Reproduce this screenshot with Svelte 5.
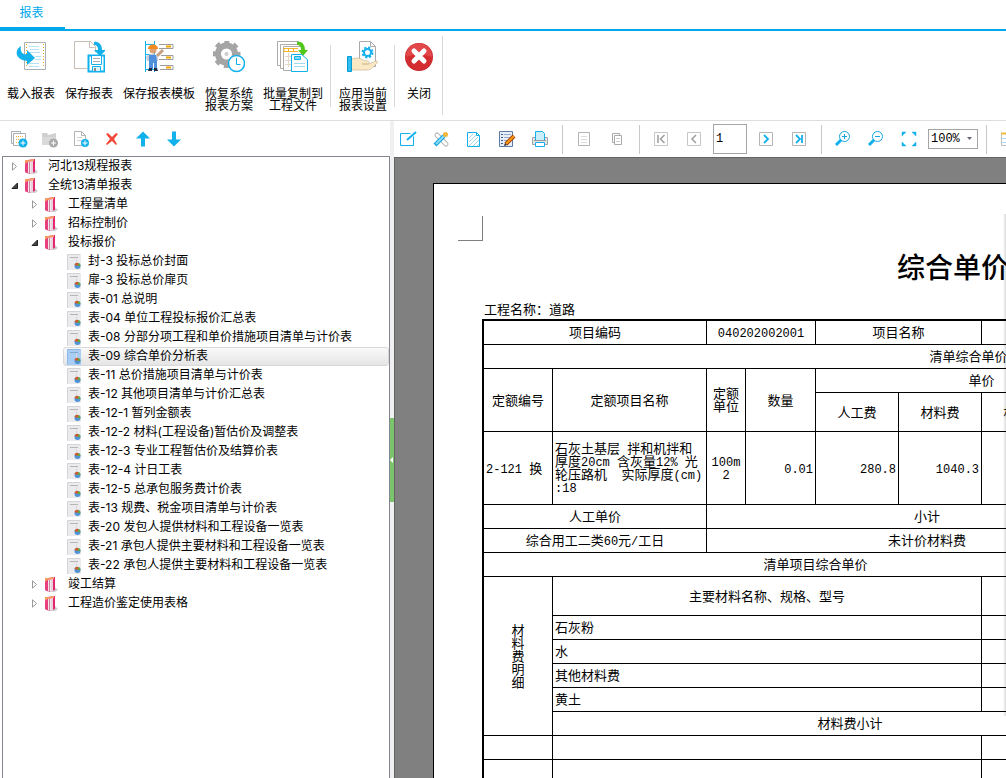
<script>
  const ribbon = [
    { icon: 'load', lines: ['载入报表'] },
    { icon: 'save', lines: ['保存报表'] },
    { icon: 'template', lines: ['保存报表模板'] },
    { icon: 'restore', lines: ['恢复系统', '报表方案'] },
    { icon: 'batch', lines: ['批量复制到', '工程文件'] },
    { sep: true },
    { icon: 'apply', lines: ['应用当前', '报表设置'] },
    { sep: true },
    { icon: 'close', lines: ['关闭'] },
    { sep: true, tall: true },
  ];

  const tree = [
    { level: 0, text: '河北13规程报表' },
    { level: 0, text: '全统13清单报表', open: true },
    { level: 1, text: '工程量清单' },
    { level: 1, text: '招标控制价' },
    { level: 1, text: '投标报价', open: true },
    { level: 2, text: '封-3 投标总价封面' },
    { level: 2, text: '扉-3 投标总价扉页' },
    { level: 2, text: '表-01 总说明' },
    { level: 2, text: '表-04 单位工程投标报价汇总表' },
    { level: 2, text: '表-08 分部分项工程和单价措施项目清单与计价表' },
    { level: 2, text: '表-09 综合单价分析表' },
    { level: 2, text: '表-11 总价措施项目清单与计价表' },
    { level: 2, text: '表-12 其他项目清单与计价汇总表' },
    { level: 2, text: '表-12-1 暂列金额表' },
    { level: 2, text: '表-12-2 材料(工程设备)暂估价及调整表' },
    { level: 2, text: '表-12-3 专业工程暂估价及结算价表' },
    { level: 2, text: '表-12-4 计日工表' },
    { level: 2, text: '表-12-5 总承包服务费计价表' },
    { level: 2, text: '表-13 规费、税金项目清单与计价表' },
    { level: 2, text: '表-20 发包人提供材料和工程设备一览表' },
    { level: 2, text: '表-21 承包人提供主要材料和工程设备一览表' },
    { level: 2, text: '表-22 承包人提供主要材料和工程设备一览表' },
    { level: 1, text: '竣工结算' },
    { level: 1, text: '工程造价鉴定使用表格' },
  ];

  let selected = $state('表-09 综合单价分析表');
  let page = $state('1');
  let zoom = $state('100%');

  const columns = [69, 154, 39, 70, 83, 83, 83, 83, 72, 72, 72, 71, 71];

  // Each cell: t text, c colspan, r rowspan, a alignment
  const rows = [
    { h: 's', cells: [{ t: '项目编码', c: 2 }, { t: '040202002001', c: 2 }, { t: '项目名称', c: 2 }, { t: '', c: 7 }] },
    { h: 's', cells: [{ t: '清单综合单价组成明细', c: 13 }] },
    { h: 's', cells: [{ t: '定额编号', r: 2 }, { t: '定额项目名称', r: 2 }, { t: '定额\n单位', r: 2 }, { t: '数量', r: 2 }, { t: '单价', c: 4 }, { t: '', c: 5 }] },
    { h: 'm', cells: [{ t: '人工费' }, { t: '材料费' }, { t: '机械费' }, { t: '' }, { t: '' }, { t: '' }, { t: '' }, { t: '' }, { t: '' }] },
    { h: 'l', cells: [{ t: '2-121 换', a: 'left' }, { t: '石灰土基层 拌和机拌和\n厚度20cm 含灰量12% 光\n轮压路机  实际厚度(cm)\n:18', a: 'left' }, { t: '100m\n2' }, { t: '0.01', a: 'right' }, { t: '280.8', a: 'right' }, { t: '1040.3', a: 'right' }, { t: '' }, { t: '' }, { t: '' }, { t: '' }, { t: '' }, { t: '' }, { t: '' }] },
    { h: 's', cells: [{ t: '人工单价', c: 2 }, { t: '小计', c: 6 }, { t: '', c: 5 }] },
    { h: 's', cells: [{ t: '综合用工二类60元/工日', c: 2 }, { t: '未计价材料费', c: 6 }, { t: '', c: 5 }] },
    { h: 's', cells: [{ t: '清单项目综合单价', c: 8 }, { t: '', c: 5 }] },
    { h: 'm', cells: [{ t: '材\n料\n费\n明\n细', r: 6 }, { t: '主要材料名称、规格、型号', c: 5 }, { t: '' }, { t: '', c: 6 }] },
    { h: 's', cells: [{ t: '石灰粉', c: 5, a: 'left' }, { t: '' }, { t: '', c: 6 }] },
    { h: 's', cells: [{ t: '水', c: 5, a: 'left' }, { t: '' }, { t: '', c: 6 }] },
    { h: 's', cells: [{ t: '其他材料费', c: 5, a: 'left' }, { t: '' }, { t: '', c: 6 }] },
    { h: 's', cells: [{ t: '黄土', c: 5, a: 'left' }, { t: '' }, { t: '', c: 6 }] },
    { h: 's', cells: [{ t: '材料费小计', c: 7 }, { t: '', c: 5 }] },
    { h: 's', cells: [{ t: '' }, { t: '', c: 5 }, { t: '' }, { t: '', c: 6 }] },
    { h: 's', cells: [{ t: '' }, { t: '', c: 5 }, { t: '' }, { t: '', c: 6 }] },
    { h: 's', cells: [{ t: '' }, { t: '', c: 5 }, { t: '' }, { t: '', c: 6 }] },
  ];

  const runs = (text) => text.split(/([ -~]+)/).filter(Boolean);
  const isLatin = (run) => /^[ -~]/.test(run);
</script>

{#snippet ribbonIcon(name)}
  <svg width="32" height="32" viewBox="0 0 32 32" fill="none" aria-hidden="true">
    {#if name === 'load'}
      <path d="M9.5 1.500h21v27h-21z" fill="#fff" stroke="#a9b0b4" />
      <path d="M11.500 3v24M28.500 3v24" stroke="#f0a71c" stroke-dasharray="1 2" />
      <path d="M14 5.500h10M15 8.500h9M14 11.500h11M20 15.500h6M20 18.500h6M14 22.500h10M14 25.500h10" stroke="#b5e3f5" />
      <path d="M6 5C-1 9 0 19 12 20v4l8-7-8-8v4c-5 1-7-3-6-8z" fill="#12b1ec" />
    {:else if name === 'save'}
      <path d="M1.500 .500h16l5 5v6M1.500 .500v27h13M16.500 .500v6h5" stroke="#c8beb4" />
      <path d="M21 1c5-1 8 3 8 8h4l-6 6-6-6h4c0-3-1-5-4-5z" fill="#12b1ec" />
      <path d="M15.500 14.500h16v16h-16z" fill="#fff" stroke="#12b1ec" stroke-width="2" />
      <path d="M18.500 15v8.500h10V15" fill="#fff" stroke="#12b1ec" />
      <path d="M20 17.500h7M20 20.500h7" stroke="#aaa" />
      <path d="M19.500 25.500h8v5h-8z" fill="#d9f2fc" stroke="#12b1ec" /><path d="M21 27h2v3h-2z" fill="#888" />
    {:else if name === 'template'}
      <path d="M2.500 0v31M11.500 0v31M2 3.500h10M2 13.500h10M2 28.500h10" stroke="#12b1ec" />
      <path d="M16 3.500h14v4H16M18 14.500h12v4H16M17 24.500h13v4H17" stroke="#9c9c9c" />
      <path d="M23 5.500h5M23 16.500h5M23 26.500h5" stroke="#f7a400" stroke-width="2" />
      <path d="M14 15l6-6" stroke="#c6a080" stroke-width="3" />
      <path d="M3 16c2-4 10-4 12 0v4H4z" fill="#c9ccd6" />
      <path d="M6 14h7l1 6v8h-3v-6h-1v6H6z" fill="#4f8fdc" /><path d="M6 27h3v3H5zM11 27h3l1 3h-4z" fill="#222a48" />
      <circle cx="10" cy="9" r="3.500" fill="#dba276" /><path d="M5 8c0-6 10-6 10 0z" fill="#f58a1f" />
    {:else if name === 'restore'}
      <circle cx="13.500" cy="13" r="8.500" stroke="#a5a5a5" stroke-width="6" />
      <circle cx="13.500" cy="13" r="12" stroke="#a5a5a5" stroke-width="4" stroke-dasharray="5 4.420" stroke-dashoffset="2.500" />
      <circle cx="13.500" cy="13" r="2" fill="#ccc" />
      <circle cx="23.500" cy="22.500" r="8" fill="#fff" stroke="#12b1ec" stroke-width="1.500" />
      <path d="M23.500 17v6.500h4" stroke="#12b1ec" />
    {:else if name === 'batch'}
      <path d="M.500 .500h21v24h-21z" fill="#fff" stroke="#b0aba6" /><path d="M3.500 3.500h21v24h-21z" fill="#fff" stroke="#b0aba6" /><path d="M6.500 5.500h18v24h-18z" fill="#fff" stroke="#b0aba6" />
      <path d="M7 7.500h14M7 10.500h14M7 7v4M11.500 7v4M16.500 7v4" stroke="#f7b52a" />
      <path d="M8 15.500h6M8 19.500h6M8 23.500h6M11.500 12v14" stroke="#e5d8c8" />
      <path d="M20 1c6-1 8 4 8 8h3l-5 6-5-6h3c0-3-1-5-4-5z" fill="#53c81c" />
      <path d="M14.500 13.500h10l6 5v12h-16z" fill="#fff" stroke="#12b1ec" /><path d="M17.500 15.500h6v3h-6z" fill="#7ddcf2" stroke="#12b1ec" />
      <path d="M17 22.500h11M17 25.500h11" stroke="#9ddcf4" />
    {:else if name === 'apply'}
      <path d="M12.500 .500h11l5 5v20h-16z" fill="#fff" stroke="#aaa" /><path d="M23.500 .500v5h5" stroke="#aaa" />
      <circle cx="20.500" cy="11.500" r="5" stroke="#12b1ec" stroke-width="2" stroke-dasharray="2.200 1.727" /><circle cx="20.500" cy="11.500" r="3.500" fill="#fff" stroke="#12b1ec" stroke-width="2" />
      <path d="M4 18l6-1c4 0 6 3 10 3 3 0 3 3 0 3h-5 7l7-3c2 0 2 1 1 2-3 3-6 7-10 7H4z" fill="#fbe9c4" stroke="#c8b798" stroke-width=".7" />
      <path d="M.500 15.500h4v15h-4z" fill="#2fbdf0" stroke="#0a9bd3" />
    {:else}
      <circle cx="16" cy="16" r="14" fill="#c9272b" /><circle cx="16" cy="15" r="13" fill="#e2474a" />
      <path d="M3 16a13 13 0 0 0 26 0c-8-3-18-3-26 0z" fill="#d32d31" />
      <path d="M11 10l10 10M21 10L11 20" stroke="#fff" stroke-width="5" stroke-linecap="round" />
    {/if}
  </svg>
{/snippet}

{#snippet smallIcon(name)}
  <svg width="18" height="18" viewBox="0 0 18 18" fill="none" aria-hidden="true">
    {#if name === 'new-set'}
      <path d="M1.500 1.500h9v12h-9z" fill="#fff" stroke="#a9b0b4" /><path d="M3.500 3.500h12v12h-12z" fill="#fff" stroke="#a9b0b4" /><path d="M6 6.500h8M6 9.500h8M6 12.500h3" stroke="#f0b43c" stroke-dasharray="1 1" />
      <circle cx="13" cy="13" r="4.500" fill="#12b1ec" /><path d="M13 10.500v5M10.500 13h5" stroke="#fff" />
    {:else if name === 'new-folder'}
      <path d="M1 3h5l1 2 8-2v11H1z" fill="#d0d0d0" /><path d="M1 7h14v8H1z" fill="#dadada" /><circle cx="12.500" cy="13" r="4.500" fill="#aaa" /><path d="M12.500 10.500v5M10 13h5" stroke="#fff" />
    {:else if name === 'new-file'}
      <path d="M2.500 1.500h7l4 4v10h-11zM9.500 1.500v4h4" fill="#fff" stroke="#b4b4b4" /><path d="M5 7.500h5M5 10.500h5" stroke="#d0d0d0" /><circle cx="13" cy="13" r="4" fill="#12b1ec" /><path d="M13 10.500v5M10.500 13h5" stroke="#fff" />
    {:else if name === 'delete'}
      <path d="M3 4l2-1 4 4 4-4 2 1-4 5 3 5-1 1-4-4-5 4-1-1 4-5z" fill="#f2483a" />
    {:else if name === 'up'}
      <path d="M9 1.500l7 7h-5v8H7v-8H2z" fill="#12b1ec" />
    {:else if name === 'down'}
      <path d="M9 16.500l7-7h-5v-8H7v8H2z" fill="#12b1ec" />
    {:else if name === 'edit'}
      <path d="M1.500 3.500h13v12h-13z" stroke="#12b1ec" /><path d="M8 10l8-8" stroke="#fff" stroke-width="4" /><path d="M8 10l9-8" stroke="#12b1ec" stroke-width="2" />
    {:else if name === 'tools'}
      <path d="M5 5l9 9" stroke="#b5b5b5" stroke-width="5" stroke-linecap="round" /><path d="M5 5l9 9" stroke="#fff" stroke-width="3" stroke-linecap="round" /><path d="M3 15l9-9" stroke="#12a5e0" stroke-width="4" /><path d="M4 14l8-8" stroke="#8ddaf6" stroke-width="2" /><circle cx="13.500" cy="4.500" r="2.500" fill="#f3b53b" />
    {:else if name === 'hatch'}
      <path d="M2.500 2.500h9l3 3v11h-12z" fill="#fff" stroke="#12b1ec" /><path d="M11.500 2.500v3h3" stroke="#12b1ec" /><path d="M4 8l4-4M4 12l7-7M4 16l9-9M8 16l6-6M12 16l2-2" stroke="#8fcfe4" stroke-width=".8" />
    {:else if name === 'compose'}
      <path d="M1.500 1.500h13v15h-13z" fill="#e8eef8" stroke="#5d7ba9" /><path d="M3 4.500h2M3 7.500h2M3 10.500h2M3 13.500h2" stroke="#3d5b91" /><path d="M6 4.500h7M6 7.500h6M6 10.500h4" stroke="#9aadca" /><path d="M8 14l8-8" stroke="#a33a00" stroke-width="4" /><path d="M8 14l8-8" stroke="#f79a16" stroke-width="2" /><path d="M6 16l3-1-2-2z" fill="#222" />
    {:else if name === 'print'}
      <path d="M1.500 7.500h15v7h-15z" fill="#e4e4e4" stroke="#a5a5a5" /><path d="M4.500 10V1.500h7l2 2V10" fill="#c8edf9" stroke="#12b1ec" /><path d="M4.500 12.500h9v4h-9z" fill="#fff" stroke="#12b1ec" /><path d="M3 10.500h12" stroke="#999" />
    {:else if name === 'single'}
      <path d="M3.500 2.500h11v13h-11z" stroke="#b4b4b4" /><path d="M6 6.500h6M6 9.500h6M6 12.500h6" stroke="#dadada" />
    {:else if name === 'copy'}
      <path d="M4.500 3.500h7v9h-7z" stroke="#aaa" /><path d="M6.500 5.500h7v9h-7z" fill="#fff" stroke="#aaa" /><path d="M8 8.500h4M8 11.500h4" stroke="#ccc" />
    {:else if name === 'first'}
      <path d="M2.500 2.500h13v13h-13z" stroke="#c6c6c6" /><path d="M6 5v8M12.500 5l-4 4 4 4" stroke="#9c9c9c" stroke-width="1.500" />
    {:else if name === 'prev'}
      <path d="M2.500 2.500h13v13h-13z" stroke="#c6c6c6" /><path d="M11 5L7 9l4 4" stroke="#9c9c9c" stroke-width="1.500" />
    {:else if name === 'next'}
      <path d="M2.500 2.500h13v13h-13z" stroke="#b5b5b5" /><path d="M7 5l4 4-4 4" stroke="#12b1ec" stroke-width="1.800" />
    {:else if name === 'last'}
      <path d="M2.500 2.500h13v13h-13z" stroke="#b5b5b5" /><path d="M6 5l4 4-4 4M12 5v8" stroke="#12b1ec" stroke-width="1.800" />
    {:else if name === 'zoom-in' || name === 'zoom-out'}
      <circle cx="10.500" cy="6.500" r="5" stroke="#12a5e0" /><path d="M7 10l-5 5" stroke="#12b1ec" stroke-width="3" /><path d="M8 6.500h5" stroke="#12a5e0" />{#if name === 'zoom-in'}<path d="M10.500 4v5" stroke="#12a5e0" />{/if}
    {:else if name === 'fit'}
      <path d="M2 2h4L2 6zM16 2v4l-4-4zM2 16v-4l4 4zM16 16h-4l4-4z" fill="#12b1ec" stroke="#12b1ec" stroke-width=".5" />
    {:else if name === 'grid'}
      <path d="M2.500 3.500h14v12h-14z" stroke="#c0c0c0" /><path d="M2 3.500h15" stroke="#f0bc3c" stroke-width="2" /><path d="M3 8.500h14M3 12.500h14M7.500 5v11M12.500 5v11" stroke="#a6def4" />
    {/if}
  </svg>
{/snippet}

{#snippet tool(name, label)}
  <button class="tool" aria-label={label}>{@render smallIcon(name)}</button>
{/snippet}

<div class="app">
  <nav class="tabs"><button class="tab">报表</button></nav>

  <div class="ribbon">
    {#each ribbon as item}
      {#if item.sep}
        <span class="ribbon-sep" class:tall={item.tall}></span>
      {:else}
        <button class="ribbon-btn">
          {@render ribbonIcon(item.icon)}
          <span class="ribbon-label">{#each item.lines as line}<span>{line}</span>{/each}</span>
        </button>
      {/if}
    {/each}
  </div>

  <div class="main">
    <aside>
      <div class="side-tools">
        {@render tool('new-set', '新建报表集')}
        {@render tool('new-folder', '新建文件夹')}
        {@render tool('new-file', '新建报表')}
        {@render tool('delete', '删除')}
        {@render tool('up', '上移')}
        {@render tool('down', '下移')}
      </div>
      <ul class="tree">
        {#each tree as node}
          <li class="level-{node.level}">
            {#if node.level < 2}
              <svg class="arrow" width="9" height="9" viewBox="0 0 9 9" aria-hidden="true">
                {#if node.open}<path d="M7.500 2v5.500H2z" fill="#444" stroke="#222" />{:else}<path d="M2.500 .800v7.400l4-3.700z" fill="#fff" stroke="#999" />{/if}
              </svg>
            {/if}
            <button class="node" class:selected={selected === node.text} onclick={() => (selected = node.text)}>
              {#if node.level < 2}
                <svg width="14" height="16" viewBox="0 0 14 16" aria-hidden="true">
                  <path d="M9 9l4 4-3 2H5z" fill="#cfcfcf" />
                  <path d="M0 1h3l7-1v13l-6 2-4-2z" fill="#e3266f" />
                  <path d="M0 1h3l6-1v2L3 3 0 5z" fill="#f79a62" />
                  <path d="M3 3l5-1v12l-4 1-1-1z" fill="#f3e3ea" />
                  <path d="M4 3h1v12H4z" fill="#c9869f" /><path d="M6.500 3h1v11h-1z" fill="#dcc0cb" />
                  <path d="M0 5l3-2v11l-3-1z" fill="#e8407f" />
                </svg>
              {:else}
                <svg width="14" height="16" viewBox="0 0 14 16" aria-hidden="true">
                  <path d="M0 0h14v16H0z" fill={selected === node.text ? '#a9cdf3' : '#ebebed'} />
                  <path d="M.500 16V.500H13" fill="none" stroke={selected === node.text ? '#8fb9e6' : '#d4d4d8'} />
                  <path d="M3 3.500h8" stroke={selected === node.text ? '#86a9d0' : '#b5b5b5'} />
                  <path d="M9.500 5v4" stroke="#d9d9df" />
                  <circle cx="10.500" cy="12" r="3" fill="#4f93d6" /><path d="M10.500 12l-3-1a3 3 0 0 1 4-2z" fill="#d4562b" /><path d="M10.500 12l1-3a3 3 0 0 1 2 3z" fill="#6aa83c" />
                </svg>
              {/if}
              <span>{node.text}</span>
            </button>
          </li>
        {/each}
      </ul>
    </aside>

    <div class="splitter"><button aria-label="折叠"><svg width="4" height="8" viewBox="0 0 4 8" aria-hidden="true"><path d="M0 4l3-3v6z" fill="#fff" /></svg></button></div>

    <section class="viewer">
      <div class="view-tools">
        {@render tool('edit', '编辑')}
        {@render tool('tools', '设置')}
        {@render tool('hatch', '背景')}
        {@render tool('compose', '设计')}
        {@render tool('print', '打印')}
        <span class="tool-sep"></span>
        {@render tool('single', '单页')}
        {@render tool('copy', '复制')}
        <span class="tool-sep"></span>
        {@render tool('first', '首页')}
        {@render tool('prev', '上一页')}
        <input class="page-no" aria-label="页码" bind:value={page} />
        {@render tool('next', '下一页')}
        {@render tool('last', '末页')}
        <span class="tool-sep"></span>
        {@render tool('zoom-in', '放大')}
        {@render tool('zoom-out', '缩小')}
        {@render tool('fit', '适应页面')}
        <div class="zoom">
          <select aria-label="缩放比例" bind:value={zoom}><option>100%</option><option>75%</option><option>50%</option></select>
          <svg width="5" height="4" viewBox="0 0 5 4" aria-hidden="true"><path d="M0 0h5L2.500 3z" fill="#667" /></svg>
        </div>
        <span class="tool-sep"></span>
        {@render tool('grid', '表格')}
      </div>

      <div class="canvas">
        <div class="paper">
          <div class="margin-mark"></div>
          <div class="sheet">
            <h1>综合单价分析表</h1>
            <p>工程名称：道路</p>
            <table>
              <colgroup>{#each columns as w}<col style="width: {w}px" />{/each}</colgroup>
              <tbody>
                {#each rows as row}
                  <tr class="row-{row.h}">
                    {#each row.cells as cell}
                      <td class={cell.a ?? 'center'} colspan={cell.c ?? 1} rowspan={cell.r ?? 1}>{#each runs(cell.t) as run}{#if isLatin(run)}<span class="latin">{run}</span>{:else}{run}{/if}{/each}</td>
                    {/each}
                  </tr>
                {/each}
              </tbody>
            </table>
          </div>
        </div>
        <div class="edge-shadow"></div>
      </div>
    </section>
  </div>
</div>

<style>
  :global(body) { margin: 0; }
  .app {
    height: 100vh;
    display: flex;
    flex-direction: column;
    overflow: hidden;
    background: #fff;
    color: #000;
    font: 12px/19px Inter, "Noto Sans CJK SC", sans-serif;
  }
  button {
    border: 0;
    padding: 0;
    background: none;
    color: inherit;
    font: inherit;
  }
  svg { display: block; flex: none; }

  .tabs { display: flex; border-bottom: 2px solid #00a8ec; flex: none; }
  .tab {
    width: 65px;
    height: 29px;
    padding: 0 2px 2px 0;
    border-bottom: 2px solid #00a8ec;
    color: #00a8ec;
  }

  .ribbon {
    display: flex;
    flex: none;
    height: 89px;
    padding-left: 2px;
    border-bottom: 1px solid #dedede;
  }
  .ribbon-btn {
    display: flex;
    flex-direction: column;
    align-items: center;
    padding: 10px 5px 0;
    gap: 15px;
  }
  .ribbon-label { display: flex; flex-direction: column; line-height: 12px; white-space: nowrap; }
  .ribbon-sep { width: 1px; height: 62px; margin: 14px 3px 0 2px; background: #d8d8d8; }
  .ribbon-sep.tall { height: 79px; margin-top: 5px; }

  .main { flex: 1; min-height: 0; display: flex; }
  aside { width: 390px; flex: none; display: flex; flex-direction: column; padding-left: 2px; box-sizing: border-box; }
  .side-tools { display: flex; gap: 3px; height: 35px; align-items: center; padding-left: 3px; flex: none; }
  .tool {
    width: 28px;
    height: 28px;
    display: flex;
    align-items: center;
    justify-content: center;
    flex: none;
  }
  .tree {
    flex: 1;
    min-height: 0;
    overflow: hidden;
    margin: 0;
    padding: 0;
    list-style: none;
    border: 1px solid #828790;
    border-bottom: 0;
  }
  .tree li { display: flex; align-items: center; height: 19px; }
  .arrow { margin-right: 2px; }
  .level-0 { padding-left: 7px; }
  .level-1 { padding-left: 27px; }
  .level-2 { padding-left: 60px; }
  .node {
    flex: 1;
    height: 19px;
    display: flex;
    align-items: center;
    gap: 7px;
    padding: 0 3px;
    border: 1px solid transparent;
    border-radius: 3px;
    white-space: nowrap;
  }
  .node span { padding-bottom: 2px; }
  .node.selected { background: linear-gradient(#fafafa, #e5e5e5); border-color: #d9d9d9; }
  .level-0 .node, .level-1 .node { gap: 9px; }

  .splitter { width: 4px; flex: none; background: #f0f0f0; display: flex; align-items: center; }
  .splitter button { width: 4px; height: 84px; background: #7cc46c; margin-bottom: -20px; }

  .viewer { flex: 1; min-width: 0; display: flex; flex-direction: column; overflow: hidden; }
  .view-tools { display: flex; align-items: center; gap: 5px; height: 36px; flex: none; }
  .tool-sep { width: 1px; height: 29px; margin: 0 2px 0 3px; background: #c8c8c8; flex: none; }
  .page-no {
    width: 34px;
    height: 30px;
    box-sizing: border-box;
    padding: 0 2px;
    border: 1px solid #a5a5a5;
    font: 12px "Liberation Mono", monospace;
    flex: none;
  }
  .zoom { display: flex; align-items: center; flex: none; }
  .zoom select {
    width: 50px;
    height: 20px;
    padding: 0 2px;
    border: 1px solid #a5a5a5;
    background: #fff;
    appearance: none;
    font: 12px "Liberation Mono", monospace;
    color: #000;
  }
  .zoom svg { margin: 0 6px 0 -11px; }

  .canvas {
    position: relative;
    flex: 1;
    min-height: 0;
    overflow: hidden;
    padding: 25px 0 0 38px;
    background: #808080;
    border: solid #646464;
    border-width: 1px 0 0 1px;
  }
  .paper { width: 1122px; min-height: 100%; border: 1px solid #000; background: #fff; padding-top: 32px; }
  .margin-mark { width: 24px; height: 24px; margin-left: 24px; border: solid #808080; border-width: 0 1px 1px 0; }
  .sheet { width: 1026px; margin-left: 48px; font-family: "Noto Sans CJK SC", sans-serif; font-size: 13px; }
  h1 { margin: 7px 0 16px; font-size: 28px; line-height: 36px; font-weight: 500; text-align: center; }
  p { margin: 0; padding: 0 0 1px 2px; line-height: 18px; }
  table {
    width: 100%;
    table-layout: fixed;
    border-collapse: separate;
    border-spacing: 0;
    border: 2px solid #000;
    line-height: 13px;
  }
  td {
    box-sizing: border-box;
    padding: 0 2px 2px;
    border: solid #000;
    border-width: 0 1px 1px 0;
    white-space: pre;
    text-align: center;
    vertical-align: middle;
  }
  td.left { text-align: left; }
  td.right { text-align: right; }
  .row-s { height: 24px; }
  .row-m { height: 39px; }
  .row-l { height: 73px; }
  .latin { font: 12px/1px "Liberation Mono", monospace; }
  .edge-shadow {
    position: absolute;
    top: 56px;
    right: 0;
    width: 3px;
    height: 502px;
    background: linear-gradient(90deg, transparent, #00000026);
  }
</style>
